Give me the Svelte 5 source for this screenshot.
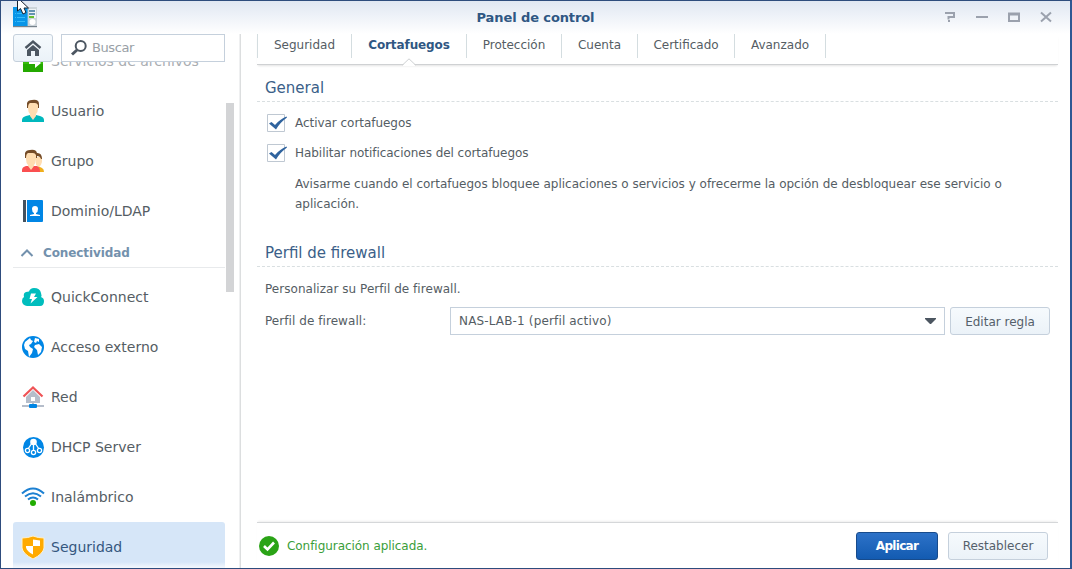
<script>
  const tabs = ['Seguridad', 'Cortafuegos', 'Protección', 'Cuenta', 'Certificado', 'Avanzado'];
  const people = [['user', 'Usuario'], ['group', 'Grupo'], ['ldap', 'Dominio/LDAP']];
  const network = [
    ['quick', 'QuickConnect'], ['globe', 'Acceso externo'], ['house', 'Red'],
    ['dhcp', 'DHCP Server'], ['wifi', 'Inalámbrico'], ['shield', 'Seguridad']
  ];
  const checks = ['Activar cortafuegos', 'Habilitar notificaciones del cortafuegos'];
</script>

{#snippet icon(name)}
  <svg class="icon" width="24" height="24" viewBox="0 0 24 24">
    {#if name === 'files'}
      <path fill="#24a900" d="M2 3h20v20H2z" /><path fill="#37bd0a" d="M2 3h20v12H2z" />
      <path fill="#fff" d="M8 12h6V8l6 6-6 5v-4H8z" />
    {:else if name === 'user'}
      <path fill="#00b8bd" d="M1 23v-2q0-3 4-4l4-1h6l4 1q4 1 4 4v2z" />
      <path fill="#ffddb1" d="M7 4q5-3 10 0v5q0 4-2 6v2l-3 4-3-4v-2q-2-2-2-6z" />
      <path fill="#754c28" d="M6 9V4q1-3 5-3 7-1 7 4v4h-1V6q-1-2-3-2H9Q7 5 7 9z" />
    {:else if name === 'group'}
      <path fill="#f0af1c" d="M17 17l4 2q2 1 2 4h-5z" />
      <path fill="#ffddb1" d="M15 8h6v5q-1 4-3 5l-3-2z" />
      <path fill="#754c28" d="M15 4q6-1 6 6h-1q-1-3-4-3z" />
      <path fill="#fa4f50" d="M1 23v-2q0-3 4-4h11q3 1 3 6z" />
      <path fill="#ffddb1" d="M5 4q5-3 10 0v6q0 4-2 6v1l-3 4-3-4v-1q-2-2-2-6z" />
      <path fill="#754c28" d="M4 9V4q1-3 5-3 7-1 7 4v4h-1V6q-1-2-3-2H7Q5 5 5 9z" />
    {:else if name === 'ldap'}
      <path fill="#45525e" d="M2 1h3v22H2z" /><path fill="#0086e5" d="M6 1h15q1 0 1 1v20q0 1-1 1H6z" />
      <path fill="#fff" d="M11 10q0-3 3-3t3 3q0 3-2 4v1l4 1v1H9v-1l4-1v-1q-2-1-2-4z" />
    {:else if name === 'quick'}
      <path fill="#00bdbd" d="M6 21a5 5 0 0 1-5-5q0-3 2-4-1-4 2-5l3-.5Q9 3 13 3q6 0 7 5 1 3 0 4 3 1 3 4 0 5-4 5z" />
      <path fill="#fff" d="M10 8.5h5L13 12h3.500l-7 6.500 1.500-4.500H8.500z" />
    {:else if name === 'globe'}
      <circle cx="12" cy="12" r="11" fill="#0086e5" />
      <path fill="#fff" d="M4 7l5-4 1 2 2 1-2 3-2 1 1 2 3 2-1 4-3 4-1-6-3-2-1-4zM14 3l4 1v3l-2-1-1 2-2-1zM14 10l4-1 3 3-1 5-3 3-1-5-3-3z" />
    {:else if name === 'house'}
      <path fill="#b5bdca" d="M12 5l7 7v6H5v-6z" /><path fill="#fff" d="M10 12h4v4h-4z" />
      <path d="M2.500 11.500L12 2.500l9.500 9" fill="none" stroke="#ef5356" stroke-width="2.200" />
      <path fill="#b5bdca" d="M1 20h22v2H1zM11 18h2v3h-2z" /><rect x="8" y="19" width="8" height="4" rx="1" fill="#0086e5" />
    {:else if name === 'dhcp'}
      <circle cx="12.500" cy="12.500" r="10.500" fill="#0086e5" />
      <circle cx="12.500" cy="7" r="3.300" fill="#fff" />
      <g stroke="#fff" stroke-width="1.300" fill="#0086e5"><path d="M11 8l-4 6M12.500 9v7M14 8l4 6" /><circle cx="6.500" cy="15.500" r="2.100" /><circle cx="12.500" cy="17.500" r="2.100" /><circle cx="18.500" cy="15.500" r="2.100" /></g>
    {:else if name === 'wifi'}
      <g fill="none" stroke="#1c80d2" stroke-width="2"><path d="M1 8.500Q12-1.500 23 8.500M4 11.500q8-6.500 16 0M7 14.500q5-4 10 0" /></g>
      <circle cx="12" cy="18" r="3" fill="#21ac00" />
    {:else if name === 'shield'}
      <path fill="#ffaa00" stroke="#fff2cd" d="M1 3q6 0 11-2 5 2 11 2v10q-1 6-11 11Q2 19 1 13z" />
      <path fill="#fff" d="M12 4.500l7 1V11h-7zM5 11h7v8.500q-6-3-7-7z" />
    {/if}
  </svg>
{/snippet}

{#snippet item(name, label)}
  <div class="item" class:selected={label === 'Seguridad'}>{@render icon(name)}<span>{label}</span></div>
{/snippet}

<div class="window">
  <header>
    <h1>Panel de control</h1>
    <svg class="app-icon" width="28" height="28" viewBox="0 0 28 28">
      <path fill="#0895e8" d="M1 7h15v19H1z" /><path fill="#ccd4da" d="M15 7h10v19H15z" />
      <path fill="#77838d" d="M1 26h24v1.200H1z" /><path stroke="#36baf9" d="M3 13.500h1M5 13.500h6M3 17.500h1M5 17.500h8M3 21.500h1M5 21.500h8" />
      <path fill="#eef3f6" d="M17 9h7v9h-7z" /><path stroke="#38749b" stroke-width="1.500" d="M17 11h6M17 14h6" /><path stroke="#66bf30" stroke-width="2" d="M17 17h5" />
      <circle cx="20.500" cy="22" r="3" fill="#fff" /><path stroke="#55aee2" d="M15.500 7v19" />
      <path fill="#fff" stroke="#17202e" d="M5.500-1v12L8.500 8.500 11 14l3-1.500L12 8h4.500L7-1z" />
    </svg>
    <svg class="controls" width="114" height="16" viewBox="0 0 114 16" fill="none" stroke="#9ba1ad" stroke-width="2">
      <path d="M2 4h10M11 4v4H5.500v2.500M5 12h2M33 8h12" /><path d="M66 5v7h10V5M65 5h12" stroke-width="2" /><path d="M65 5h12" stroke-width="3" /><path d="M98 3.500l10 9M108 3.500l-10 9" />
    </svg>
  </header>
  <div class="body">
    <aside>
      <div class="searchbar">
        <button class="home" aria-label="Inicio"><svg width="18" height="18" viewBox="0 0 18 18"><path d="M1.500 9L9 2.500 16.500 9" fill="none" stroke="#4c5661" stroke-width="2.400" /><path fill="#4c5661" d="M9 6l6 5v6h-4v-5H7v5H3v-6z" /></svg></button>
        <div class="search"><svg width="18" height="18" viewBox="0 0 18 18" fill="none" stroke="#4c5661"><circle cx="10.700" cy="7" r="5" stroke-width="2" /><path stroke-width="3" d="M7 11l-5 4.500" /></svg><span>Buscar</span></div>
      </div>
      <nav>
        <div class="list">
          {@render item('files', 'Servicios de archivos')}
          {#each people as [name, label]}{@render item(name, label)}{/each}
          <div class="category"><svg width="14" height="8" viewBox="0 0 14 8"><path d="M1.500 7L7 1.500 12.500 7" fill="none" stroke="#7391ad" stroke-width="2" /></svg><span>Conectividad</span></div>
          {#each network as [name, label]}{@render item(name, label)}{/each}
        </div>
        <i class="scroll"></i>
      </nav>
    </aside>
    <main>
      <div class="tabs">
        {#each tabs as tab}<div class="tab" class:active={tab === 'Cortafuegos'}><span>{tab}</span></div>{/each}
        <svg class="notch" width="14" height="8" viewBox="0 0 14 8"><path fill="#fff" d="M1 7l6-6 6 6v1H1z" /><path d="M.5 7L7 .8 13.500 7" fill="none" stroke="#cdd0d2" /></svg>
      </div>
      <section>
        <h2>General</h2>
        {#each checks as label}
          <div class="check"><svg width="21" height="20" viewBox="0 0 21 20"><path d="M.5 1.500h17v17H.5z" fill="#fff" stroke="#bfc8d2" /><path fill="#2f639e" d="M2 10.500L4.500 9 8 12q5-6 11.500-8.500l.5 1q-7 5-11 12z" /></svg><span>{label}</span></div>
        {/each}
        <p class="hint">Avisarme cuando el cortafuegos bloquee aplicaciones o servicios y ofrecerme la opción de desbloquear ese servicio o<br />aplicación.</p>
        <h2 class="profile">Perfil de firewall</h2>
        <p class="intro">Personalizar su Perfil de firewall.</p>
        <div class="field">
          <span class="label">Perfil de firewall:</span>
          <div class="select"><span>NAS-LAB-1 (perfil activo)</span><svg width="11" height="6" viewBox="0 0 11 6"><path fill="#4c5661" d="M0 0h11v1L6 6H5L0 1z" /></svg></div>
          <button>Editar regla</button>
        </div>
      </section>
      <footer>
        <svg width="20" height="20" viewBox="0 0 20 20"><circle cx="10" cy="10" r="10" fill="#2aa316" /><path d="M5 10l3.500 3.500L15 6.500" fill="none" stroke="#fff" stroke-width="2.600" /></svg>
        <span class="status">Configuración aplicada.</span>
        <button class="primary">Aplicar</button>
        <button>Restablecer</button>
      </footer>
    </main>
  </div>
</div>

<style>
  :global(body) { margin: 0; overflow: hidden; }
  .window, .window * { box-sizing: border-box; }
  .window { position: relative; display: flex; flex-direction: column; width: 1072px; height: 569px; border: 1px solid #2e4c7d; border-right: 2px solid #2f5793; background: #fff; font: 12px/20px "DejaVu Sans", Verdana, sans-serif; color: #555d64; white-space: nowrap; overflow: hidden; }
  header { height: 33px; flex: none; display: flex; justify-content: center; background: linear-gradient(#e0e7f2, #fff); }
  h1 { margin: 0; font-size: 13px; line-height: 33px; color: #2f5783; letter-spacing: -.1px; }
  .app-icon { position: absolute; left: 11px; top: -1px; }
  .controls { position: absolute; right: 13px; top: 8px; }
  .body { display: flex; flex: 1; min-height: 0; }
  aside { width: 240px; display: flex; flex-direction: column; padding-left: 12px; border-right: 1px solid #dcdedf; box-shadow: inset -1px 0 #eff0f1; }
  .searchbar { display: flex; gap: 8px; height: 28px; flex: none; position: relative; z-index: 1; }
  button { height: 28px; width: 100px; padding: 0; border: 1px solid #c5d0dc; border-radius: 3px; background: linear-gradient(#f6fafd, #ebf2f8); color: #55606b; font: inherit; }
  button.home { width: 40px; display: flex; align-items: center; justify-content: center; }
  .search { width: 164px; border: 1px solid #c5d0dc; background: #fff; display: flex; align-items: center; gap: 4px; padding-left: 8px; color: #999fa6; font-size: 13px; }
  .search span { letter-spacing: -.4px; }
  nav { flex: 1; min-height: 0; display: flex; overflow: hidden; gap: 1px; }
  .list { width: 212px; margin-top: -26px; }
  .item { height: 50px; display: flex; align-items: center; gap: 6px; padding-left: 8px; font-size: 14px; border-radius: 3px; }
  .item:first-child span { color: #a9adb1; }
  .icon { flex: none; }
  .item.selected { background: linear-gradient(#d6e6f8 40px, #fff 48px); color: #35577f; }
  .category { height: 32px; margin-bottom: 4px; display: flex; align-items: center; gap: 9px; padding: 3px 0 0 7px; border-bottom: 1px solid #e8eaec; color: #7391ad; font-weight: bold; letter-spacing: -.1px; }
  .scroll { width: 8px; height: 189px; margin-top: 41px; background: #d3d4d6; }
  main { width: 801px; margin-left: 16px; display: flex; flex-direction: column; }
  .tabs { position: relative; display: grid; grid-template-columns: 94px 115px 95px 76px 97px 92px; height: 31px; border-bottom: 1px solid #cfd1d3; box-shadow: 0 2px 2px -1px #e4e4e4; }
  .tab { height: 24px; line-height: 23px; text-align: center; border-left: 1px solid #d4dde0; }
  .tab:nth-child(6) { border-right: 1px solid #d4dde0; }
  .active { color: #2f5783; font-weight: bold; letter-spacing: -.1px; }
  .notch { position: absolute; left: 145px; top: 24px; }
  section { flex: 1; }
  h2 { margin: 9px 0 6px; height: 28px; padding-left: 8px; font-size: 15px; font-weight: normal; line-height: 28px; color: #3b5f89; border-bottom: 1px dashed #d9dfe1; }
  .check { height: 30px; display: flex; align-items: center; gap: 7px; padding-left: 10px; letter-spacing: -.04px; }
  .hint { margin: 6px 0 0 38px; letter-spacing: -.01px; }
  h2.profile { margin-top: 25px; }
  .intro { margin: 12px 0 8px 8px; letter-spacing: .04px; }
  .field { display: flex; padding-left: 8px; line-height: 28px; }
  .label { width: 185px; letter-spacing: .06px; }
  .select { width: 495px; height: 28px; margin-right: 5px; border: 1px solid #c5d0dc; line-height: 26px; padding: 0 8px; display: flex; align-items: center; justify-content: space-between; letter-spacing: .15px; }
  footer { height: 46px; border-top: 1px solid #d5d7d9; box-shadow: 0 -2px 2px -1px #eee; display: flex; align-items: center; padding: 0 10px 0 2px; }
  .status { color: #3a9e3a; margin-left: 8px; flex: 1; letter-spacing: -.05px; }
  .primary { width: 82px; margin-right: 10px; color: #fff; border-color: #174b8c; background: linear-gradient(#2d72c8, #135bb1); font-weight: bold; letter-spacing: -.7px; }
</style>
